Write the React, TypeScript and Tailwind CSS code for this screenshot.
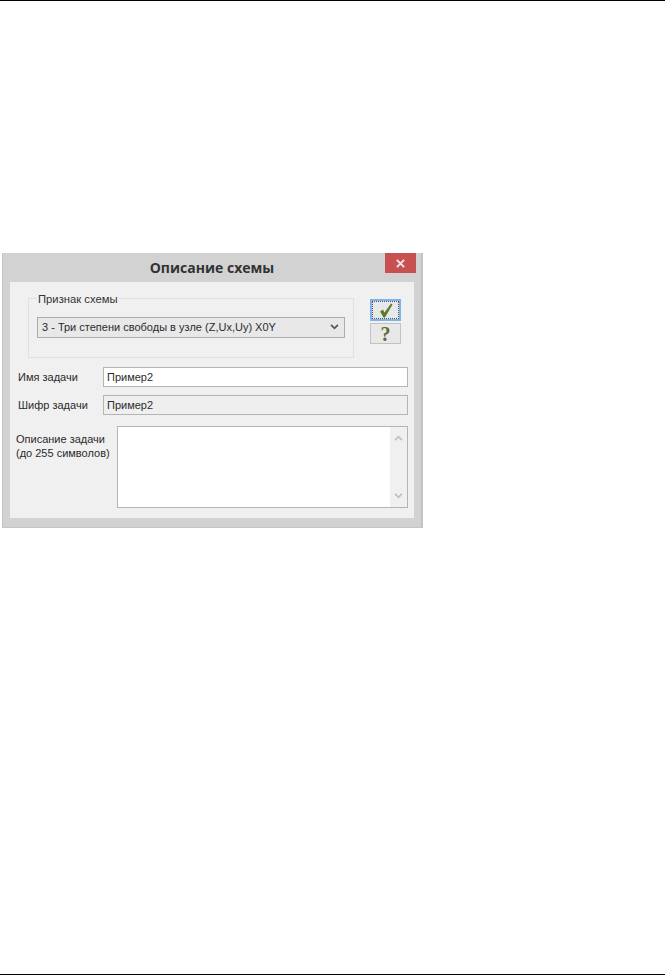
const ui = "font-['Liberation_Sans',Arial,sans-serif] text-[11px] text-[#2b2b2b]";

function Chevron({ className, up }: { className: string; up?: boolean }) {
  return (
    <svg viewBox="0 0 10 7" className={className} fill="none" stroke="currentColor" strokeWidth="2">
      <path d={up ? "M1 6l4-4 4 4" : "M1 1l4 4 4-4"} />
    </svg>
  );
}

function Field({ label, value, disabled }: { label: string; value: string; disabled?: boolean }) {
  return (
    <div className="flex items-center">
      <span className="w-[93px] pl-[8px]">{label}</span>
      <div
        className={`flex h-[20px] w-[305px] items-center border border-[#b4b4b4] pl-[3px] ${
          disabled ? "bg-[#efefef]" : "bg-white"
        }`}
      >
        {value}
      </div>
    </div>
  );
}

export default function App() {
  return (
    <div className={`flex h-[976px] w-[665px] flex-col bg-white ${ui}`}>
      <div className="h-px bg-black" />

      <div className="mt-[252px] ml-[2px] flex h-[275px] w-[421px] flex-col border-r-2 border-b border-l border-[#c4c4c4] bg-[#d2d2d2]">
        {/* title bar */}
        <div className="relative flex h-[29px] shrink-0 items-center justify-center">
          <span className="font-['Open_Sans',sans-serif] text-[14px] font-bold text-[#333]">Описание схемы</span>
          <div className="absolute top-0 right-[5px] flex h-[20px] w-[31px] items-center justify-center bg-[#c75050]">
            <svg viewBox="0 0 10 10" className="h-[9px] w-[9px]" stroke="#f4e6e6" strokeWidth="2.2">
              <path d="M1 1l8 8M9 1l-8 8" />
            </svg>
          </div>
        </div>

        {/* dialog body */}
        <div className="mx-[7px] flex h-[236px] flex-col bg-[#f0f0f0]">
          <div className="ml-[18px] flex pt-[8px]">
            <fieldset className="h-[68px] w-[326px] border border-[#e0e0e0] px-[8px]">
              <legend className="px-[1px] pt-px text-[11.25px] text-[#333]">Признак схемы</legend>
              <div className="mt-[9px] flex h-[21px] items-center justify-between border border-[#adadad] bg-[#e8e8e8] pr-[5px] pl-[4px]">
                <span>3 - Три степени свободы в узле (Z,Ux,Uy) X0Y</span>
                <Chevron className="h-[6px] w-[9px] text-[#555]" />
              </div>
            </fieldset>
            <div className="ml-[16px] flex flex-col gap-[2px] pt-[9px]">
              <div className="flex h-[22px] w-[31px] items-center justify-center border-2 border-[#7eb4ea] bg-[#e8e8e8] outline-1 -outline-offset-3 outline-[#555] outline-dotted">
                <svg viewBox="0 0 14 15" className="h-[15px] w-[14px]">
                  <path d="M1 8.5L4 6.5 5.5 9.5 12 .5l1.5 1L6 14.5H4.5z" fill="#5f7a2e" />
                </svg>
              </div>
              <div className="flex h-[21px] w-[31px] items-center justify-center border border-[#c2c2c2] bg-[#e8e8e8] font-['Liberation_Serif',serif] text-[20px] font-bold text-[#5f6b30]">
                ?
              </div>
            </div>
          </div>

          <div className="mt-[9px] flex flex-col gap-[8px]">
            <Field label="Имя задачи" value="Пример2" />
            <Field label="Шифр задачи" value="Пример2" disabled />
          </div>

          <div className="mt-[11px] flex">
            <div className="w-[107px] pt-[6px] pl-[6px] leading-[14px]">
              Описание задачи
              <br />
              (до 255 символов)
            </div>
            <div className="flex h-[82px] w-[291px] justify-end border border-[#b4b4b4] bg-white">
              <div className="flex w-[17px] flex-col items-center justify-between bg-[#f0f0f0] py-[8px] text-[#c0c0c0]">
                <Chevron up className="h-[6px] w-[9px]" />
                <Chevron className="h-[6px] w-[9px]" />
              </div>
            </div>
          </div>
        </div>
      </div>

      <div className="mt-auto mb-px h-px bg-black" />
    </div>
  );
}
